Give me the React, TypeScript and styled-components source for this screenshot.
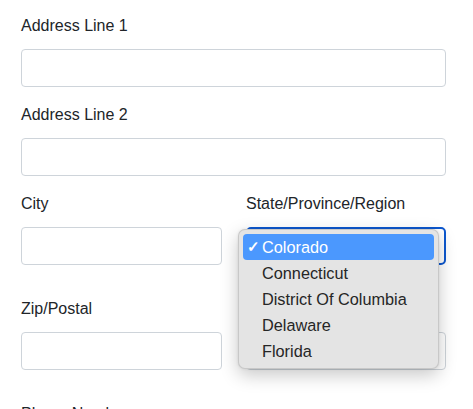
import React from "react";
import styled, { createGlobalStyle } from "styled-components";

const GlobalStyle = createGlobalStyle`
  body {
    margin: 0;
    background: #fff;
    color: #212529;
    font-family: "Liberation Sans", Arial, sans-serif;
    font-size: 16px;
  }
`;

const Form = styled.form`
  width: 425px;
  padding: 14px 0 0 21px;
`;

const FormGroup = styled.div`
  margin-bottom: 16px;
`;

const FormRow = styled.div`
  display: grid;
  grid-template-columns: 201px 200px;
  column-gap: 24px;
  margin-bottom: 32px;
`;

const Field = styled.div`
  position: relative;
`;

const Label = styled.label`
  display: block;
  line-height: 24px;
  margin-bottom: 11px;
`;

const Input = styled.input`
  display: block;
  width: 100%;
  height: 38px;
  box-sizing: border-box;
  border: 1px solid #ced4da;
  border-radius: 4px;
  background: #fff;
  font: inherit;
  padding: 6px 12px;
`;

const SelectBox = styled.div<{ $focused?: boolean }>`
  height: 38px;
  box-sizing: border-box;
  border: ${(p) => (p.$focused ? "2px solid #0d58cf" : "1px solid #ced4da")};
  border-radius: 5px;
  background: #fff;
`;

const Menu = styled.ul`
  position: absolute;
  top: 37px;
  left: -8px;
  width: 201px;
  margin: 0;
  padding: 4px;
  box-sizing: border-box;
  list-style: none;
  background: #e4e4e4;
  border: 1px solid rgba(0, 0, 0, 0.12);
  border-radius: 7px;
  box-shadow: 0 6px 18px rgba(0, 0, 0, 0.22), 0 0 3px rgba(0, 0, 0, 0.08);
  z-index: 10;
`;

const MenuItem = styled.li<{ $selected?: boolean }>`
  position: relative;
  height: 26px;
  line-height: 26px;
  padding-left: 19px;
  border-radius: 4px;
  font-size: 16.3px;
  color: ${(p) => (p.$selected ? "#fff" : "#262626")};
  background: ${(p) => (p.$selected ? "#4b98fe" : "transparent")};
`;

const Check = styled.span`
  position: absolute;
  left: 4px;
  top: 0;
  font-size: 15px;
  font-weight: bold;
`;

const states = [
  "Colorado",
  "Connecticut",
  "District Of Columbia",
  "Delaware",
  "Florida",
];

export default function App() {
  return (
    <>
      <GlobalStyle />
      <Form>
        <FormGroup>
          <Label>Address Line 1</Label>
          <Input type="text" />
        </FormGroup>
        <FormGroup>
          <Label>Address Line 2</Label>
          <Input type="text" />
        </FormGroup>
        <FormRow>
          <Field>
            <Label>City</Label>
            <Input type="text" />
          </Field>
          <Field>
            <Label>State/Province/Region</Label>
            <SelectBox $focused />
            <Menu>
              {states.map((s, i) => (
                <MenuItem key={s} $selected={i === 0}>
                  {i === 0 && <Check>✓</Check>}
                  {s}
                </MenuItem>
              ))}
            </Menu>
          </Field>
        </FormRow>
        <FormRow>
          <Field>
            <Label>Zip/Postal</Label>
            <Input type="text" />
          </Field>
          <Field>
            <Label>Country</Label>
            <Input type="text" />
          </Field>
        </FormRow>
        <FormGroup>
          <Label>Phone Number</Label>
          <Input type="text" />
        </FormGroup>
      </Form>
    </>
  );
}
